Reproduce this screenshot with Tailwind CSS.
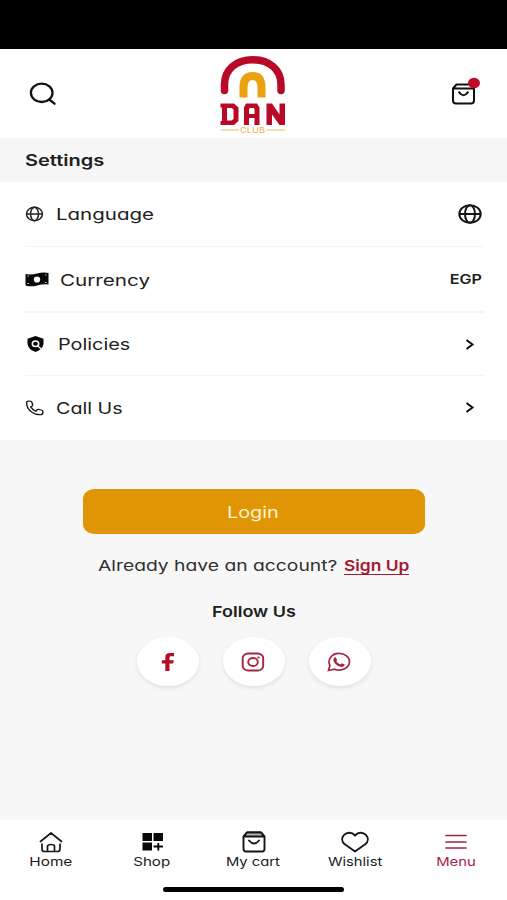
<!DOCTYPE html>
<html lang="en">
<head>
<meta charset="utf-8">
<title>DAN Club</title>
<script src="https://cdn.jsdelivr.net/npm/@tailwindcss/browser@4"></script>
</head>
<body class="w-[507px] h-[900px] overflow-hidden bg-[#f7f7f7] text-[#202020] [font-family:Inter,'Open_Sans',sans-serif] [font-feature-settings:'cv11']">
<div class="flex h-[900px] flex-col">
  <div class="h-[49px] shrink-0 bg-black"></div>
  <header class="flex h-[89px] shrink-0 items-start justify-between bg-white pl-[29px] pr-[26px]">
    <svg class="mt-[33px] h-6 w-7" viewBox="0 0 28 24" fill="none" stroke="#111" stroke-width="2.3" stroke-linecap="round"><ellipse cx="12.700" cy="10.800" rx="10.800" ry="9.200"/><path d="M20.200 17.500l5.300 4.200"/></svg>
    <svg class="mt-[5px] h-20 w-[70px]" viewBox="0 0 70 80">
      <path d="M5.500 36.500V30.500C5.500 15.500 17 5.800 33.700 5.800S62 15.500 62 30.500V36.500" fill="none" stroke="#b80a26" stroke-width="7.500" stroke-linecap="round"/>
      <path d="M24.500 43.500V33.500Q24.500 22 33.500 22T42.500 33.500V43.500" fill="none" stroke="#e9a20d" stroke-width="8"/>
      <g fill="#b80a26" fill-rule="evenodd"><path d="M1.500 49.500H15L19.500 53.500V67L15 71H1.500V67H3V53.500H1.500ZM8 54V66.500H12.500L14.500 65V55.500L12.500 54Z"/><path d="M25 71V53.500L27 49.500H38L40.500 53.500V71H35.500V64H30V71ZM30 60H35.500V55L34.500 54H31L30 55Z"/><path d="M47.500 71V49.500H53L60.500 60.500V49.500H66V71H60.500L53 60.500V71Z"/></g>
      <path d="M2 76H20M47 76H66" stroke="#e8bd65" stroke-width="1"/>
      <text x="21" y="78.800" font-family="Inter" font-size="7.500" textLength="25" lengthAdjust="spacingAndGlyphs" fill="#dfaf4e">CLUB</text>
    </svg>
    <svg class="mt-[28px] h-7 w-[30px]" viewBox="0 0 30 28" fill="none" stroke="#111" stroke-width="2" stroke-linecap="round" stroke-linejoin="round"><path d="M2 11.500L5.500 7.500H19.500L23 11.500V23.500Q23 26.500 20 26.500H5Q2 26.500 2 23.500ZM2 11.500H23M8 15.200Q12.500 21.500 17 15.200"/><ellipse cx="23" cy="6" rx="6" ry="5.200" fill="#c00a29" stroke="none"/></svg>
  </header>
  <div class="flex h-11 shrink-0 items-center px-[25px] text-[16px] font-semibold"><span class="origin-left scale-x-[1.25]">Settings</span></div>
  <main class="h-[258px] shrink-0 bg-white pl-[25px] pr-[23px]">
    <div class="flex h-[65px] items-center border-b border-[#f4f4f4]">
      <svg class="h-4 w-[19px]" viewBox="0 0 19 16" fill="none" stroke="#222" stroke-width="1.500"><ellipse cx="9.500" cy="8" rx="8" ry="6.700"/><ellipse cx="9.500" cy="8" rx="4" ry="6.700"/><path d="M1.500 8H17.500"/></svg>
      <span class="ml-3 origin-left scale-x-[1.28] text-[16px]">Language</span>
      <svg class="ml-auto mr-[1px] h-[22px] w-[26px]" viewBox="0 0 26 22" fill="none" stroke="#151515" stroke-width="2"><ellipse cx="13" cy="11" rx="10.700" ry="8.800"/><ellipse cx="13" cy="11" rx="5" ry="8.800"/><path d="M2 11H24"/></svg>
    </div>
    <div class="flex h-[66px] items-center border-b-2 border-[#f5f5f5] pt-px">
      <svg class="h-[15px] w-6" viewBox="0 0 24 15"><path fill="#080808" d="M.5 2Q6 3 12 1.500T23.500 1V12.500Q18 11.800 12 13.500T.5 13.500Z"/><ellipse cx="12" cy="7.500" rx="3.200" ry="3.100" fill="#fff"/><path d="M2.500 4H4M2.500 11.500H4M20 3H21.500M20 10.500H21.500" stroke="#ccc" stroke-width="1.200" fill="none"/></svg>
      <span class="ml-[11px] origin-left scale-x-[1.29] text-[16px]">Currency</span>
      <span class="ml-auto mr-[2px] origin-right scale-x-[1.24] text-[13px] font-semibold">EGP</span>
    </div>
    <div class="flex h-[63px] items-center border-b border-[#f4f4f4]">
      <svg class="ml-[2px] h-4 w-[17px]" viewBox="0 0 17 16"><path fill="#090909" d="M8.500 0L16.500 2.800V8Q16 13.200 8.500 16Q1 13.200.5 8V2.800Z"/><ellipse cx="8.500" cy="7.800" rx="3.200" ry="2.800" fill="none" stroke="#fff" stroke-width="1.500"/><path d="M10.500 9.800L14.500 13.200" stroke="#fff" stroke-width="1.400"/></svg>
      <span class="ml-[13.500px] origin-left scale-x-[1.24] text-[16px]">Policies</span>
      <svg class="ml-auto mr-[9.500px] h-[11px] w-[10px]" viewBox="0 0 10 11" fill="none" stroke="#111" stroke-width="2"><path d="M1.500 1L7.500 5.500L1.500 10"/></svg>
    </div>
    <div class="flex h-[63px] items-center">
      <svg class="h-4 w-[19px]" viewBox="0 0 24 24" preserveAspectRatio="none" fill="none" stroke="#222" stroke-width="1.900" stroke-linejoin="round"><path d="M2 4.500C2 14 10 22 19.500 22Q22.500 22 22.500 19V17.500Q22.500 15.500 20.500 15L17.500 14.200Q15.500 13.700 14.700 15.500L14 17Q9.500 15 7.200 10.300L8.700 9.300Q10 8.300 9.500 6.500L8.800 3.700Q8.200 1.800 6.200 1.800H4.500Q2 1.800 2 4.500Z"/></svg>
      <span class="ml-[11.500px] origin-left scale-x-[1.23] text-[16px]">Call Us</span>
      <svg class="ml-auto mr-[9.500px] h-[11px] w-[10px]" viewBox="0 0 10 11" fill="none" stroke="#111" stroke-width="2"><path d="M1.500 1L7.500 5.500L1.500 10"/></svg>
    </div>
  </main>
  <section class="flex grow flex-col items-center pt-[49px]">
    <button class="ml-px flex h-[45px] w-[342px] items-center justify-center rounded-[11px/10px] bg-[#e09604] text-[16px] text-[#fff3d6]"><span class="-ml-0.5 scale-x-[1.24]">Login</span></button>
    <div class="mt-[20px] flex h-6 w-[311px] items-center justify-between text-[15px]"><span class="origin-left scale-x-[1.285] whitespace-nowrap text-[#303030]">Already have an account?</span><span class="origin-right scale-x-[1.16] border-b border-[#a51835] text-[15px] leading-4 font-semibold whitespace-nowrap text-[#a51835]">Sign Up</span></div>
    <div class="mt-[22px] h-6 text-[15px] leading-6 font-semibold"><span class="inline-block scale-x-[1.2]">Follow Us</span></div>
    <div class="mt-[13px] flex gap-[24px]">
      <div class="flex h-[49px] w-[62px] items-center justify-center rounded-[50%] bg-white shadow-[0_2px_4px_#00000018]"><svg class="h-5 w-[14px]" viewBox="0 0 14 20"><path fill="#b50c2c" d="M4.300 19V11.500H.8V8.200H4.300V5.200Q4.300 1 9 1H13V4.200H10Q8.500 4.200 8.500 5.600V8.200H12.800L12.200 11.500H8.500V19Z"/></svg></div>
      <div class="flex h-[49px] w-[62px] items-center justify-center rounded-[50%] bg-white shadow-[0_2px_4px_#00000018]"><svg class="-ml-px h-5 w-6" viewBox="0 0 24 20" fill="none" stroke="#a52440" stroke-width="1.900"><rect x="1.700" y="1.500" width="20.500" height="17" rx="5.500" ry="4.800"/><ellipse cx="12" cy="10" rx="4.800" ry="4"/><ellipse cx="17.500" cy="5.500" rx="1.300" ry="1" fill="#a52440" stroke="none"/></svg></div>
      <div class="flex h-[49px] w-[62px] items-center justify-center rounded-[50%] bg-white shadow-[0_2px_4px_#00000018]"><svg class="-ml-px h-5 w-6" viewBox="0 0 24 20" fill="none" stroke="#a52440" stroke-width="1.700"><path d="M1.500 18.500L2.900 13.600C0 8 4.500 1.400 12 1.400C18 1.400 22.500 5.200 22.500 9.700C22.500 15.800 14.500 20 7.700 17.200Z"/><path fill="#a52440" stroke="none" d="M8.500 5.200L10.200 8L9.200 9.300Q10.700 11.800 13.500 12.600L14.800 11.300L17.800 12.600Q17.500 15 14.800 15Q10.500 14.500 8 11.500T6.800 6.500Q7.300 5 8.500 5.200Z"/></svg></div>
    </div>
  </section>
  <nav class="h-20 shrink-0 bg-white">
    <div class="grid h-[67px] grid-cols-5 pt-[11px] text-[12px] leading-4">
      <div class="flex flex-col items-center"><svg class="ml-px h-[22px] w-6" viewBox="0 0 24 22" fill="none" stroke="#171717" stroke-width="1.700" stroke-linecap="round" stroke-linejoin="round"><path d="M1.500 10.500L12 2L22.500 10.500M3 13V18Q3 20.500 5.500 20.500H18.500Q21 20.500 21 18V13M8.500 20V15.500Q8.500 13.500 12 13.500T15.500 15.500V20"/></svg><span class="mt-px scale-x-[1.28]">Home</span></div>
      <div class="flex flex-col items-center"><svg class="ml-px h-[22px] w-6" viewBox="0 0 24 22"><path fill="#080808" d="M1.500 2H11V10H1.500ZM12.500 2H22V10H12.500ZM1.500 11.500H11V19.500H1.500Z"/><path stroke="#080808" stroke-width="1.900" d="M12.500 15.500H22M17.300 12V19.500"/></svg><span class="mt-px scale-x-[1.26]">Shop</span></div>
      <div class="flex flex-col items-center"><svg class="ml-px h-[22px] w-6" viewBox="0 0 24 22" fill="none" stroke="#151515" stroke-width="1.900" stroke-linejoin="round" stroke-linecap="round"><path d="M1.500 5.500L5 1.500H19L22.500 5.500V18Q22.500 20.500 20 20.500H4Q1.500 20.500 1.500 18ZM7 9.500Q12 15.500 17 9.500"/><path fill="#b5b5b5" d="M1.800 5.500L5 1.500H19L22.200 5.500Z"/></svg><span class="-ml-px mt-px scale-x-[1.23]">My cart</span></div>
      <div class="flex flex-col items-center"><svg class="h-[22px] w-7" viewBox="0 0 28 22" fill="none" stroke="#171717" stroke-width="1.900" stroke-linejoin="round"><path d="M14 4.500C10.800.9 5.800 1 2.900 4.200C.2 7.300 1 10.800 3.500 13L14 20.500L24.500 13C27 10.800 27.800 7.300 25.100 4.200C22.200 1 17.200.9 14 4.500Z"/></svg><span class="mt-px scale-x-[1.23]">Wishlist</span></div>
      <div class="flex flex-col items-center text-[#a52440]"><svg class="h-[22px] w-6" viewBox="0 0 24 22" stroke="currentColor" stroke-width="1.700" stroke-linecap="round"><path d="M2 4.500H22M2 11H22M2 17H22"/></svg><span class="mt-px scale-x-[1.24]">Menu</span></div>
    </div>
    <div class="mx-auto h-[5px] w-[181px] rounded-full bg-black"></div>
  </nav>
</div>
</body>
</html>
